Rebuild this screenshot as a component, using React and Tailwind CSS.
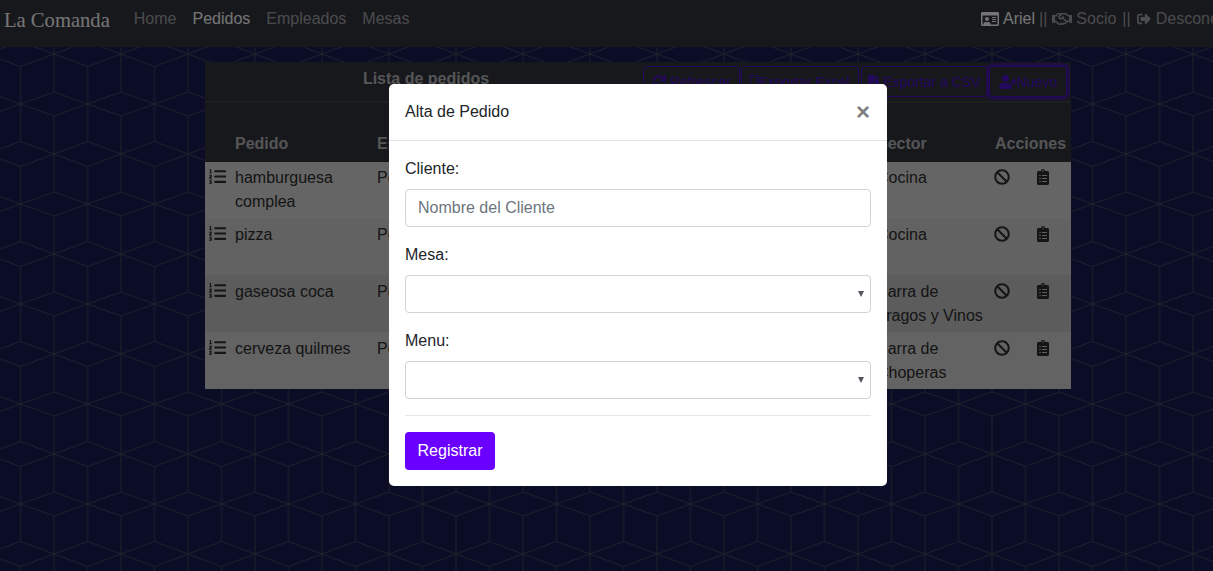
import React from 'react';
import { FaBan, FaClipboardList, FaFileAlt, FaListOl, FaRegHandshake, FaRegIdCard, FaSignOutAlt, FaSync, FaUserPlus } from 'react-icons/fa';

const pedidos = [
  { pedido: 'hamburguesa complea', sector: 'Cocina', bg: 'bg-[#cacaca]' },
  { pedido: 'pizza', sector: 'Cocina', bg: 'bg-[#c4c4c4]' },
  { pedido: 'gaseosa coca', sector: 'Barra de Tragos y Vinos', bg: 'bg-[#b8b8b8]' },
  { pedido: 'cerveza quilmes', sector: 'Barra de Choperas', bg: 'bg-[#c6c6c6]' },
];

function CubePattern() {
  return (
    <svg className="absolute inset-0 w-full h-full" aria-hidden="true">
      <defs>
        <pattern id="cubes" x="20.5" y="4" width="67" height="100" patternUnits="userSpaceOnUse">
          <path
            d="M0 0L33.5 12L67 0M0 100L33.5 88L67 100M33.5 12V50M33.5 88V50M0 37.5L33.5 50L67 37.5M0 62.5L33.5 50L67 62.5M0 0V37.5M0 62.5V100M67 0V37.5M67 62.5V100"
            fill="none"
            stroke="#3e4258"
            strokeWidth="1"
          />
        </pattern>
      </defs>
      <rect width="100%" height="100%" fill="url(#cubes)" />
    </svg>
  );
}

function Navbar() {
  return (
    <nav className="relative h-[47px] bg-[#2e3038] flex items-start whitespace-nowrap overflow-hidden">
      <a className="ml-1 mt-[5px] text-[20.6px] leading-[30px] text-white/90 font-['Liberation_Serif',serif]">La Comanda</a>
      <div className="ml-4 flex mt-[7px] text-white/50">
        <a className="px-2 leading-6">Home</a>
        <a className="px-2 leading-6 text-white/90">Pedidos</a>
        <a className="px-2 leading-6">Empleados</a>
        <a className="px-2 leading-6">Mesas</a>
      </div>
      <div className="absolute left-[981px] top-[7px] flex items-center leading-6 text-white/50">
        <FaRegIdCard className="w-[18px] h-4 text-white/90" />
        <span className="ml-1 text-white/90">Ariel</span>
        <span className="ml-1">||</span>
        <FaRegHandshake className="ml-[5px] w-5 h-4" />
        <span className="ml-1">Socio</span>
        <span className="ml-[6px]">||</span>
        <FaSignOutAlt className="ml-[6px] w-[14px] h-[14px]" />
        <span className="ml-[5px]">Desconectar</span>
      </div>
    </nav>
  );
}

function Pedidos() {
  return (
    <section className="relative ml-[205px] mt-[15px] w-[866px] bg-[#2e3038]">
      <div className="h-[41px] flex items-center border-b-2 border-[#3b3d45]">
        <h2 className="flex-1 pl-1 pb-[6px] text-center font-bold text-white/60">Lista de pedidos</h2>
        <div className="flex gap-px pr-1 text-sm text-[#4a10c0]">
          <button className="h-[31px] w-[97px] border border-[#4a10c0] rounded flex items-center justify-center gap-1">
            <FaSync className="w-[14px] h-[14px]" />
            Refrescar
          </button>
          <button className="h-[31px] w-[118px] border border-[#4a10c0] rounded flex items-center justify-center">
            <span className="inline-block w-[8px] h-[13px] border border-[#4a10c0]" />
            Exportar Excel
          </button>
          <button className="ml-px h-[31px] w-[127px] border border-[#4a10c0] rounded flex items-center justify-center gap-1">
            <FaFileAlt className="w-[11px] h-[14px]" />
            Exportar a CSV
          </button>
          <button className="h-[31px] w-[78px] border border-[#4a10c0] rounded ring-[3px] ring-[#4a10c0]/60 flex items-center justify-center">
            <FaUserPlus className="w-[18px] h-[14px]" />
            Nuevo
          </button>
        </div>
      </div>
      <div className="h-[59px] flex items-end pb-[6px] font-bold text-white/60">
        <span className="ml-[30px] w-[142px]">Pedido</span>
        <span className="w-[500px]">Estado</span>
        <span className="w-[118px]">Sector</span>
        <span>Acciones</span>
      </div>
      <div>
        {pedidos.map((p) => (
          <div key={p.pedido} className={`flex h-[57px] pt-[5px] first:h-[56px] first:pt-1 text-[#2a2a2a] ${p.bg}`}>
            <FaListOl className="ml-1 mt-[2px] w-[17px] h-[17px] shrink-0" />
            <span className="ml-[9px] w-[142px] pr-5">{p.pedido}</span>
            <span className="w-[500px]">Pendiente</span>
            <span className="w-[117px] pr-1">{p.sector}</span>
            <FaBan className="mt-[3px] w-4 h-4 shrink-0" />
            <FaClipboardList className="ml-[27px] mt-[3px] w-3 h-4 shrink-0" />
          </div>
        ))}
      </div>
    </section>
  );
}

function SelectField() {
  return (
    <div className="relative">
      <select className="block w-full h-[38px] px-3 appearance-none bg-white border border-[#ced4da] rounded text-[#495057]" />
      <span className="absolute right-[7px] top-4 w-0 h-0 border-x-[3px] border-x-transparent border-t-[6px] border-t-[#55555f]" />
    </div>
  );
}

function AltaPedido() {
  return (
    <div className="fixed inset-0 bg-black/50 pt-[84px]">
      <div className="ml-[389px] w-[498px] bg-white rounded-[5px] text-[#212529]">
        <div className="h-[57px] px-4 flex items-center justify-between border-b border-[#dee2e6]">
          <h5 className="leading-6">Alta de Pedido</h5>
          <span className="pr-[1px] text-[24px] font-bold text-[#7f7f7f] leading-none">×</span>
        </div>
        <form className="p-4">
          <label className="block mb-2 leading-6">Cliente:</label>
          <input className="block w-full h-[38px] px-3 mb-4 bg-white border border-[#ced4da] rounded text-[#495057] placeholder:text-[#6c757d]" placeholder="Nombre del Cliente" />
          <label className="block mb-2 leading-6">Mesa:</label>
          <div className="mb-4"><SelectField /></div>
          <label className="block mb-2 leading-6">Menu:</label>
          <SelectField />
          <hr className="my-4 border-[#e4e6e9]" />
          <button type="button" className="h-[38px] w-[90px] rounded bg-[#6a00ff] text-white">Registrar</button>
        </form>
      </div>
    </div>
  );
}

export default function App() {
  return (
    <div className="relative h-screen overflow-hidden bg-[#161a4e] font-['Liberation_Sans',Arial,sans-serif] text-base">
      <CubePattern />
      <Navbar />
      <Pedidos />
      <AltaPedido />
    </div>
  );
}
